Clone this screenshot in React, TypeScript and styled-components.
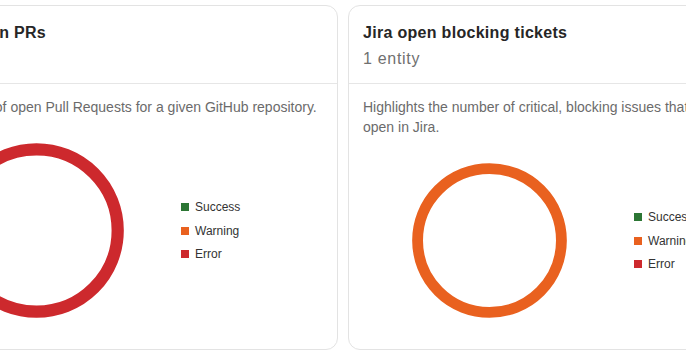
import styled, { createGlobalStyle } from 'styled-components'

const GlobalStyle = createGlobalStyle`
  html, body {
    margin: 0;
    padding: 0;
    background: #ffffff;
    overflow: hidden;
  }
  body {
    font-family: "Liberation Sans", Arial, Helvetica, sans-serif;
  }
`

const colors = {
    success: '#2c7634',
    warning: '#e9611f',
    error: '#cd292d'
}

type Widget = {
    title: string
    subtitle: string
    description: string
    status: keyof typeof colors
}

const widgets: Widget[] = [
    {
        title: 'GitHub open PRs',
        subtitle: '1 entity',
        description: 'Total number of open Pull Requests for a given GitHub repository.',
        status: 'error'
    },
    {
        title: 'Jira open blocking tickets',
        subtitle: '1 entity',
        description: 'Highlights the number of critical, blocking issues that are currently open in Jira.',
        status: 'warning'
    }
]

function Donut({color}: { color: string }) {
    return (
        <DonutSvg viewBox="0 0 100 100">
            <circle cx="50" cy="50" r="46.4" fill="none" stroke={color} strokeWidth="7"/>
        </DonutSvg>
    )
}

function App() {
    return (
        <>
            <GlobalStyle/>
            <Grid>
                {widgets.map((w) => (
                    <Card key={w.title}>
                        <CardHeader>
                            <Title>{w.title}</Title>
                            <Subtitle>{w.subtitle}</Subtitle>
                        </CardHeader>
                        <Description>{w.description}</Description>
                        <ChartArea>
                            <DonutBox>
                                <Donut color={colors[w.status]}/>
                            </DonutBox>
                            <Legend>
                                <LegendItem><Swatch $color={colors.success}/>Success</LegendItem>
                                <LegendItem><Swatch $color={colors.warning}/>Warning</LegendItem>
                                <LegendItem><Swatch $color={colors.error}/>Error</LegendItem>
                            </Legend>
                        </ChartArea>
                    </Card>
                ))}
            </Grid>
        </>
    )
}

export default App

const Grid = styled.div`
  display: flex;
  gap: 10px;
  padding-top: 5px;
  margin-left: -105px;
  height: 360px;
  box-sizing: border-box;
`

const Card = styled.div`
  flex: 0 0 443px;
  height: 345px;
  box-sizing: border-box;
  border: 1px solid #e3e3e3;
  border-radius: 12px;
  background: #ffffff;
  display: flex;
  flex-direction: column;
  overflow: hidden;
`

const CardHeader = styled.div`
  padding: 15px 14px 12px;
  border-bottom: 1px solid #e6e6e6;
`

const Title = styled.div`
  font-size: 16px;
  line-height: 24px;
  font-weight: 600;
  letter-spacing: 0.3px;
  color: #262626;
`

const Subtitle = styled.div`
  font-size: 16px;
  line-height: 24px;
  letter-spacing: 0.7px;
  color: #707070;
  margin-top: 2px;
`

const Description = styled.div`
  padding: 13px 14px 0;
  font-size: 14px;
  line-height: 20px;
  color: #6b6b6b;
`

const ChartArea = styled.div`
  flex: 1;
  min-height: 0;
  display: flex;
  align-items: center;
  padding: 26px 0 31px;
`

const DonutBox = styled.div`
  width: 280px;
  height: 100%;
  display: flex;
  justify-content: center;
`

const DonutSvg = styled.svg`
  height: 100%;
  aspect-ratio: 1;
  display: block;
`

const Legend = styled.div`
  display: flex;
  flex-direction: column;
  gap: 7.5px;
  margin-left: 5px;
`

const LegendItem = styled.div`
  display: flex;
  align-items: center;
  gap: 6px;
  font-size: 12px;
  line-height: 16px;
  color: #333333;
`

const Swatch = styled.span<{ $color: string }>`
  width: 8px;
  height: 8px;
  background: ${(p) => p.$color};
`
